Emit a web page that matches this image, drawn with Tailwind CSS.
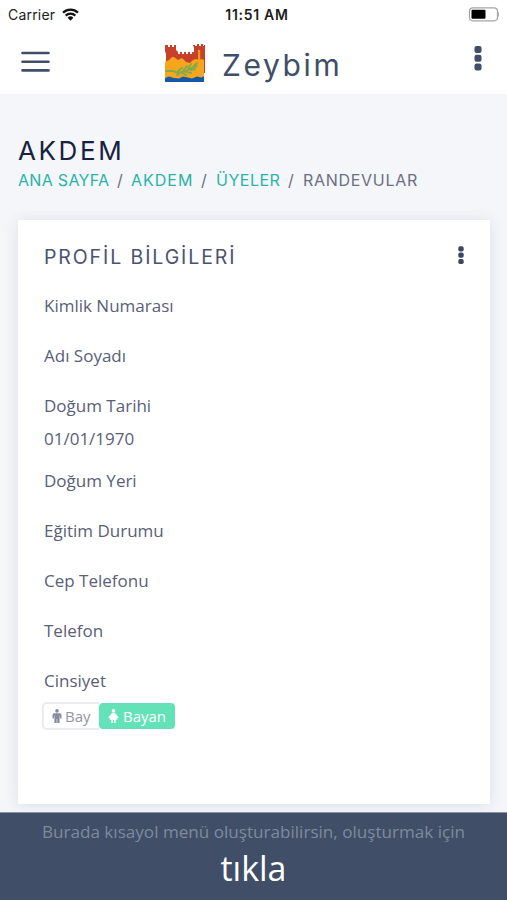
<!DOCTYPE html>
<html lang="tr">
<head>
    <meta charset="UTF-8">
    <meta name="viewport" content="width=device-width, initial-scale=1.0">
    <title>Zeybim</title>
    <script src="https://cdn.jsdelivr.net/npm/@tailwindcss/browser@4"></script>
</head>
<body class="h-[900px] overflow-hidden flex flex-col bg-[#f4f6fa] font-['Open_Sans',sans-serif] text-[17px] text-[#596078]">

    <!-- Status bar -->
    <div class="h-7 shrink-0 bg-white grid grid-cols-3 items-center px-2 font-['Inter',sans-serif] text-[14px] text-[#1c1c1c]">
        <div class="flex items-center gap-[7px]">
            <span class="tracking-[0.2px]">Carrier</span>
            <svg width="17" height="13" viewBox="0 0 17 13" fill="none" stroke="#111" stroke-width="2.3">
                <path d="M1 4.6a10.8 10.8 0 0 1 15 0M3.7 7.6a7 7 0 0 1 9.6 0"/>
                <path d="M5.6 9.7a4.2 4.2 0 0 1 5.8 0L8.5 12.7z" fill="#111" stroke="none"/>
            </svg>
        </div>
        <div class="text-center text-[14px] font-semibold tracking-[0.7px] whitespace-nowrap pl-[7px]">11:51 AM</div>
        <div class="flex justify-end">
            <svg width="32" height="15" viewBox="0 0 32 15">
                <rect x="2.5" y="0.8" width="28" height="13" rx="3.5" fill="#fff" stroke="#a5a5a5" stroke-width="1.2"/>
                <rect x="4.5" y="2.8" width="14" height="9" rx="1" fill="#000"/>
                <path d="M31.2 5.5v4a2 2 0 0 0 0-4z" fill="#999"/>
            </svg>
        </div>
    </div>

    <!-- Navbar -->
    <header class="h-[66px] shrink-0 bg-white flex items-start pl-[21px] pr-[25px]">
        <svg class="mt-[23px]" width="29" height="22" viewBox="0 0 29 22" stroke="#404e67" stroke-width="2.6" stroke-linecap="round">
            <path d="M1.5 2h26M1.5 10.7h26M1.5 19.4h26"/>
        </svg>
        <div class="ml-[115px] flex items-start pt-4">
            <svg width="40" height="38" viewBox="0 0 40 38">
                <path d="M1 1h2v2h2V1h2v2h2V1h2v5l2 2v2h2V8h2v2h2V8h2v2h2V8h2v2h2V8h2V4l-1-3h2v1h2V0h2v2h2V0h2v2h1V1h2v5l-1 3v20H1V10L0 7V1z" fill="#c8402a"/>
                <path d="M33 6h2.2v14H33z" fill="#ef9a1e"/>
                <path d="M0 18l4-2 3-3h2l4 3 4-2 4 4 4 1 3-3 3-1 3 1 3-1 2 1v20H0z" fill="#f7a51c"/>
                <path d="M0 34l4-1.500 5 1.500 5 .5 4-2 5 1 4 1 5-2 4 1 3-1v6H0z" fill="#1458a8"/>
                <g fill="none" stroke="#83ab4c" stroke-width="1.9" stroke-linecap="round">
                    <path d="M1 27h7l5 2 8-2 7-4 4-4M14 30l-2 1M13 27l4-3M18 27l4-5M23 25l3-5M17 29l4 2M21 28l5 1M26 26l4-1M29 23l3-1"/>
                </g>
            </svg>
            <span class="ml-[17px] mt-[3px] font-['Inter',sans-serif] text-[30px] leading-9 tracking-[2.6px] text-[#404e67]">Zeybim</span>
        </div>
        <svg class="ml-auto mt-[18px]" width="8" height="25" viewBox="0 0 8 25" fill="#404e67">
            <rect x="0.5" y="0" width="7" height="7" rx="2"/>
            <rect x="0.5" y="8.7" width="7" height="7" rx="2"/>
            <rect x="0.5" y="17.4" width="7" height="7" rx="2"/>
        </svg>
    </header>

    <!-- Content -->
    <main class="h-[718px] shrink-0 px-[18px] pt-[41px]">
        <h1 class="font-['Inter',sans-serif] text-[26px] leading-8 tracking-[2.6px] text-[#18213f]">AKDEM</h1>
        <nav class="mt-px flex font-['Inter',sans-serif] text-[16px] leading-6 text-[#6b6f82] whitespace-nowrap">
            <a class="w-[99px] tracking-[0.3px] text-[#2bb3a8]">ANA SAYFA</a>
            <span class="w-[14px]">/</span>
            <a class="w-[70px] tracking-[1px] text-[#2bb3a8]">AKDEM</a>
            <span class="w-[15px]">/</span>
            <a class="w-[72px] tracking-[0.5px] text-[#2bb3a8]">ÜYELER</a>
            <span class="w-[15px]">/</span>
            <span class="tracking-[0.7px]">RANDEVULAR</span>
        </nav>

        <!-- Profile card -->
        <section class="mt-[28px] h-[584px] w-[472px] bg-white px-[26px] pt-[24px] shadow-[0_1px_14px_rgba(62,57,107,0.12)]">
            <div class="flex items-start justify-between">
                <h2 class="font-['Inter',sans-serif] text-[19.5px] leading-[26px] tracking-[1.9px] text-[#4b5270]">PROFİL BİLGİLERİ</h2>
                <svg class="mt-[2px]" width="6" height="19" viewBox="0 0 6 19" fill="#3b4663">
                    <rect x="0.3" y="0.3" width="5.4" height="5.2" rx="1.8"/>
                    <rect x="0.3" y="6.6" width="5.4" height="5.2" rx="1.8"/>
                    <rect x="0.3" y="12.9" width="5.4" height="5.2" rx="1.8"/>
                </svg>
            </div>
            <div class="mt-[23px] leading-[26px]">
                <p class="h-[50px]">Kimlik Numarası</p>
                <p class="h-[50px]">Adı Soyadı</p>
                <p class="h-[33px]">Doğum Tarihi</p>
                <p class="h-[42px]">01/01/1970</p>
                <p class="h-[50px]">Doğum Yeri</p>
                <p class="h-[50px]">Eğitim Durumu</p>
                <p class="h-[50px]">Cep Telefonu</p>
                <p class="h-[50px]">Telefon</p>
                <p class="h-[34px]">Cinsiyet</p>
            </div>
            <div class="-ml-[2px] flex h-7 text-[15px] leading-[26px]">
                <button class="w-[57px] pl-[8px] flex items-center gap-[3px] rounded-l-[5px] border-2 border-r-0 border-[#ececf0] bg-white text-[#9295a4]">
                    <svg width="10" height="15" viewBox="0 0 10 15" fill="#858aa0">
                        <circle cx="5" cy="1.9" r="1.8"/>
                        <path d="M2.2 4.2h5.6Q9.5 4.2 9.5 6v3.6H8V6.5h-.4V14H5.3v-4h-.6v4H2.4V6.5H2v3.1H.5V6q0-1.8 1.7-1.8z"/>
                    </svg>
                    <span>Bay</span>
                </button>
                <button class="my-px w-[76px] pl-[9px] flex items-center gap-[4px] rounded-[4px] bg-[#64e2b7] text-white">
                    <svg width="11" height="15" viewBox="0 0 11 15" fill="#fff">
                        <circle cx="5.5" cy="1.9" r="1.8"/>
                        <path d="M4 4.1h3l3.7 4.3-1 1-1.2-1 .9 2.4H7.7V14H6V11H5v3H3.3v-3.2H1.6l.9-2.4-1.2 1-1-1z"/>
                    </svg>
                    <span>Bayan</span>
                </button>
            </div>
        </section>
    </main>

    <!-- Shortcut footer -->
    <footer class="h-[88px] shrink-0 border-t border-[#8a93a6] bg-[#404e67] text-center">
        <p class="pt-[6px] text-[17.1px] leading-[26px] text-[#7e8a9f] whitespace-nowrap">Burada kısayol menü oluşturabilirsin, oluşturmak için</p>
        <a class="block text-[34px] leading-[46px] text-white">tıkla</a>
    </footer>

</body>
</html>
